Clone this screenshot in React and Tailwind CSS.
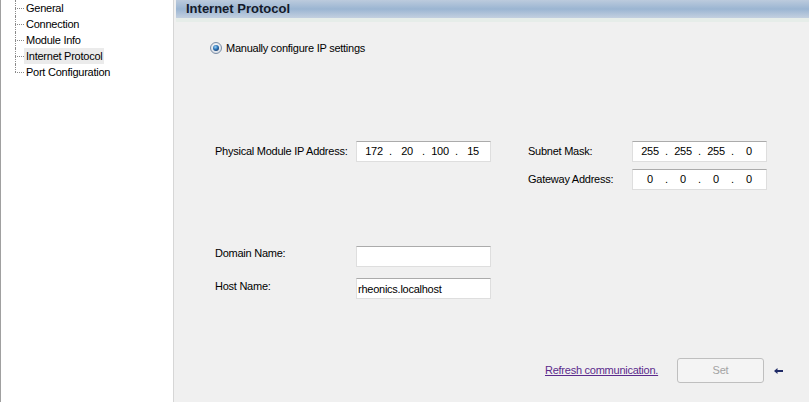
import React from 'react';

const TREE_ITEMS = ['General', 'Connection', 'Module Info', 'Internet Protocol', 'Port Configuration'];
const SELECTED = 'Internet Protocol';

function TreeRow({ label, last }) {
  return (
    <div className="flex h-4">
      <div className="flex w-[9px] flex-col">
        <div className="h-2 border-l border-dotted border-[#8a8a8a]" />
        <div
          className={
            last
              ? 'h-2 border-t border-dotted border-[#8a8a8a]'
              : 'h-2 border-l border-t border-dotted border-[#8a8a8a]'
          }
        />
      </div>
      <div
        className={`flex h-4 items-center px-[2px] ${label === SELECTED ? 'bg-[#ebebeb]' : ''}`}
      >
        {label}
      </div>
    </div>
  );
}

function RadioDot() {
  return (
    <svg width="12" height="12" viewBox="0 0 12 12">
      <defs>
        <radialGradient id="rbg" cx="50%" cy="40%" r="60%">
          <stop offset="0%" stopColor="#ffffff" />
          <stop offset="100%" stopColor="#d6dbe2" />
        </radialGradient>
        <radialGradient id="rdot" cx="40%" cy="35%" r="70%">
          <stop offset="0%" stopColor="#9cd2f5" />
          <stop offset="55%" stopColor="#2b74b8" />
          <stop offset="100%" stopColor="#1a3d6e" />
        </radialGradient>
      </defs>
      <circle cx="6" cy="6" r="5.5" fill="url(#rbg)" stroke="#7b8ea6" />
      <circle cx="6" cy="6" r="3" fill="url(#rdot)" />
    </svg>
  );
}

function TextBox({ children, className = '' }) {
  return (
    <div
      className={`flex h-[21px] w-[135px] items-center border border-[#dedede] border-t-[#ababab] bg-white ${className}`}
    >
      {children}
    </div>
  );
}

function IpBox({ parts }) {
  return (
    <TextBox className="pl-[2px]">
      {parts.map((p, i) => (
        <React.Fragment key={i}>
          <span className="w-[30px] text-center">{p}</span>
          {i < parts.length - 1 && <span className="w-[3px] text-center">.</span>}
        </React.Fragment>
      ))}
    </TextBox>
  );
}

function BackArrow() {
  return (
    <svg width="9" height="6" viewBox="0 0 9 6">
      <path d="M0 3 L3.5 0 L3.5 2 L9 2 L9 4 L3.5 4 L3.5 6 Z" fill="#1f2a66" />
    </svg>
  );
}

export default function App() {
  return (
    <div
      className="flex h-[402px] w-[809px] overflow-hidden bg-[#f0f0f0] text-[11px] tracking-[-0.25px] text-black"
      style={{ fontFamily: '"Liberation Sans", Arial, sans-serif' }}
    >
      {/* navigation tree */}
      <div className="w-[174px] shrink-0 border-l border-r border-l-[#a0a0a0] border-r-[#d6d6d6] bg-white">
        <div className="ml-[14px]">
          {TREE_ITEMS.map((item, i) => (
            <TreeRow key={item} label={item} last={i === TREE_ITEMS.length - 1} />
          ))}
        </div>
      </div>

      {/* settings page */}
      <div className="ml-[2px] flex-1">
        <div className="flex h-[18px] items-center bg-gradient-to-b from-[#bccbdd] via-[#9bb5d2] to-[#c3d0e0] pl-[10px] text-[13px] font-bold tracking-normal text-[#141a2a]">
          Internet Protocol
        </div>
        <div className="h-[4px] bg-[#e6ede9]" />

        <div className="mt-[20px] flex h-[12px] items-center gap-[4px] pl-[34px]">
          <RadioDot />
          <span>Manually configure IP settings</span>
        </div>

        <div className="mt-[87px] flex items-start pl-[39px]">
          <div className="flex h-[21px] items-center">
            <span className="w-[141px]">Physical Module IP Address:</span>
            <IpBox parts={['172', '20', '100', '15']} />
          </div>
          <div className="ml-[37px] flex flex-col gap-[7px]">
            <div className="flex h-[21px] items-center">
              <span className="w-[104px]">Subnet Mask:</span>
              <IpBox parts={['255', '255', '255', '0']} />
            </div>
            <div className="flex h-[21px] items-center">
              <span className="w-[104px]">Gateway Address:</span>
              <IpBox parts={['0', '0', '0', '0']} />
            </div>
          </div>
        </div>

        <div className="mt-[55px] flex flex-col gap-[10px] pl-[39px]">
          <div className="flex items-center">
            <span className="w-[141px] pb-[6px]">Domain Name:</span>
            <TextBox />
          </div>
          <div className="flex items-center">
            <span className="w-[141px] pb-[6px]">Host Name:</span>
            <TextBox className="pl-[1px]">rheonics.localhost</TextBox>
          </div>
        </div>

        <div className="mt-[58px] flex items-center pl-[369px]">
          <a href="#" className="w-[132px] text-[#5b2a8c] underline">
            Refresh communication.
          </a>
          <button
            disabled
            className="flex h-[25px] w-[87px] items-center justify-center rounded-[3px] border border-[#bfbfbf] bg-[#f4f4f4] text-[#a3a3a3]"
          >
            Set
          </button>
          <div className="ml-[10px] flex items-center">
            <BackArrow />
          </div>
        </div>
      </div>
    </div>
  );
}
